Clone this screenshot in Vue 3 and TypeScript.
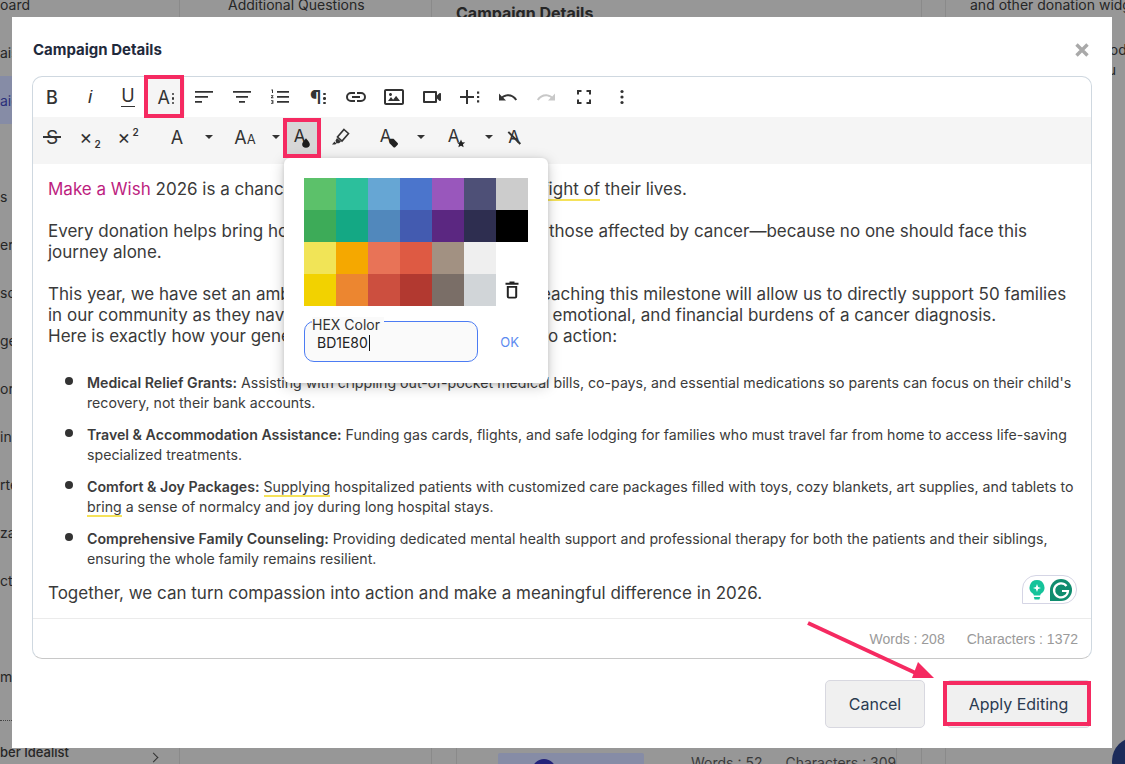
<template>
  <div class="page">
    <!-- dimmed page behind the dialog -->
    <div class="backdrop">
      <aside class="side">
        <div class="side-top">oard</div>
        <div v-for="(label, i) in sideItems" :key="i" class="side-item" :class="{ active: i === 1 }">{{ label }}</div>
        <div class="side-dots"></div>
        <div class="side-last"><span>ber Idealist</span><i class="chev"></i></div>
      </aside>
      <section class="col-two">Additional Questions</section>
      <section class="col-three">
        <h2>Campaign Details</h2>
        <div class="col-three-foot">
          <div class="thumb"><span></span></div>
          <div class="counts"><span>Words : 52</span><span>Characters : 309</span></div>
        </div>
      </section>
      <div class="col-gap"></div>
      <section class="col-four">
        <p>and other donation widgets</p>
        <p class="far">Good</p>
        <p class="far next">You</p>
      </section>
    </div>

    <div class="modal">
      <header class="modal-head">
        <h1>Campaign Details</h1>
        <svg class="close" width="16" height="16" viewBox="0 0 16 16"><path d="M2.500 2.500l11 11M13.500 2.500l-11 11" /></svg>
      </header>

      <div class="editor">
        <div class="tb-row">
          <span class="tb tb-b">B</span>
          <span class="tb tb-i">i</span>
          <span class="tb tb-u">U</span>
          <span class="tb tb-a on">A<em class="dots"><b></b><b></b><b></b></em></span>
          <span class="tb"><svg viewBox="0 0 24 24"><path d="M3 6h18v1.700H3zM3 11h13v1.700H3zM3 16h7v1.700H3z" /></svg></span>
          <span class="tb"><svg viewBox="0 0 24 24"><path d="M3 6h18v1.700H3zM6 11h12v1.700H6zM9 16h6v1.700H9z" /></svg></span>
          <span class="tb"><svg viewBox="0 0 24 24"><path d="M9 6h12v1.800H9zM9 11h12v1.800H9zM9 16h12v1.800H9zM3.400 4.500h1.600v3.600H4V5.600h-.6zM3 10.200h2.400v.9l-1.300 1.200h1.300v.9H3v-.9l1.300-1.200H3zM3 15.200h2.400v3.600H3v-.9h1.400v-.5H3.600v-.8h.8v-.5H3z" /></svg></span>
          <span class="tb tb-para">¶<em class="dots"><b></b><b></b><b></b></em></span>
          <span class="tb"><svg viewBox="0 0 24 24"><path d="M11,17H7A5,5,0,0,1,7,7h4V9H7a3,3,0,0,0,0,6h4ZM17,7H13V9h4a3,3,0,0,1,0,6H13v2h4A5,5,0,0,0,17,7Zm-1,4H8v2h8Z" /></svg></span>
          <span class="tb"><svg viewBox="0 0 24 24"><path d="M14.200,11l3.800,5H6l3-3.900l2.100,2.700L14,11H14.200z M8.500,11c0.800,0,1.500-0.700,1.500-1.500S9.300,8,8.500,8S7,8.700,7,9.500C7,10.300,7.700,11,8.500,11z M22,6v12c0,1.100-0.900,2-2,2H4c-1.100,0-2-0.900-2-2V6c0-1.100,0.900-2,2-2h16C21.100,4,22,4.900,22,6z M20,8.800V6H4v12h16V8.800z" /></svg></span>
          <span class="tb"><svg viewBox="0 0 24 24"><path d="M15,8v8H5V8H15m2,2.500V7a1,1,0,0,0-1-1H4A1,1,0,0,0,3,7V17a1,1,0,0,0,1,1H16a1,1,0,0,0,1-1V13.500l2.290,2.290A1,1,0,0,0,21,15.080V8.910a1,1,0,0,0-1.710-.71Z" /></svg></span>
          <span class="tb"><svg viewBox="0 0 24 24"><path d="M2 11h6V5h2v6h6v2h-6v6H8v-6H2zM19 6.500h2.200v2.200H19zM19 10.900h2.200v2.200H19zM19 15.300h2.200v2.200H19z" /></svg></span>
          <span class="tb"><svg viewBox="0 0 24 24"><path d="M10.400,9.400c-1.700,0.300-3.200,0.900-4.600,2L3,8.500v7h7l-2.700-2.700c3.700-2.600,8.800-1.800,11.500,1.900c0.200,0.300,0.400,0.500,0.500,0.800l1.800-0.900C18.900,10.800,14.700,8.700,10.400,9.400z" /></svg></span>
          <span class="tb off"><svg viewBox="0 0 24 24"><path d="M13.600,9.400c1.700,0.300,3.200,0.900,4.600,2L21,8.500v7h-7l2.700-2.700C13,10.100,7.900,11,5.200,14.700c-0.200,0.300-0.400,0.500-0.500,0.800L2.900,14.600C5.100,10.800,9.300,8.700,13.600,9.400z" /></svg></span>
          <span class="tb"><svg viewBox="0 0 24 24"><path d="M5 9.500V5h4.500v2H7v2.500zM14.500 5H19v4.500h-2V7h-2.500zM5 14.500h2V17h2.500v2H5zM17 14.500h2V19h-4.500v-2H17z" /></svg></span>
          <span class="tb"><svg viewBox="0 0 24 24"><circle cx="12" cy="6.500" r="1.600" /><circle cx="12" cy="12" r="1.600" /><circle cx="12" cy="17.500" r="1.600" /></svg></span>
        </div>

        <div class="tb-row second">
          <span class="tb tb-s">S<i class="strike"></i></span>
          <span class="tb tb-x">×<sub>2</sub></span>
          <span class="tb tb-x">×<sup>2</sup></span>
          <span class="gap11"></span>
          <span class="tb tb-font">A</span>
          <span class="caret w26"></span>
          <span class="tb tb-font w46">A<small>A</small></span>
          <span class="caret w15"></span>
          <span class="tb tb-color">A<svg class="badge" viewBox="0 0 10 12"><path d="M5 0C5 0 9.800 5 9.800 7.700a4.800 4.300 0 0 1-9.600 0C.2 5 5 0 5 0z" /></svg></span>
          <span class="tb"><svg viewBox="0 0 24 24"><path class="hl" d="M16 4.500L20.500 8.500L14 16L9.500 12Z" /><path d="M9 13L13 16.500L11 18.200L8.300 18.200L7.500 15.500ZM6.500 16.500L8.500 18.800L7 19.500L4 19.500Z" /></svg></span>
          <span class="gap10"></span>
          <span class="tb tb-color">A<svg class="badge tag" viewBox="0 0 12 12"><path d="M2 1h4l5 5a1.500 1.500 0 0 1 0 2l-3 3a1.500 1.500 0 0 1-2 0L1 6V2a1 1 0 0 1 1-1z" /></svg></span>
          <span class="caret w27"></span>
          <span class="gap4"></span>
          <span class="tb tb-color tb-star">A<svg class="badge star" viewBox="0 0 12 12"><path d="M6 .5l1.600 3.700 4 .3-3 2.600.9 4L6 9l-3.500 2.100.9-4-3-2.600 4-.3z" /></svg></span>
          <span class="caret w26"></span>
          <span class="tb tb-clear w24">A<i class="slash"></i></span>
        </div>

        <div class="content">
          <p><span class="pink">Make a Wish</span> 2026 is a chance to stand beside families in <span class="gr">the fight of</span> their lives.</p>
          <p class="skip">Every donation helps bring hope, comfort, and practical aid to those affected by cancer—because no one should face this<br />journey alone.</p>
          <p class="skip">This year, we have set an ambitious goal of raising $50,000, reaching this milestone will allow us to directly support 50 families<br />in our community as they navigate the overwhelming physical, emotional, and financial burdens of a cancer diagnosis.<br />Here is exactly how your generous contributions will be put into action:</p>

          <ul>
            <li v-for="item in items" :key="item.title">
              <i class="dot"></i>
              <span><strong>{{ item.title }}</strong> <template v-for="(part, i) in item.parts" :key="i"><span :class="{ gr: part.mark }">{{ part.text }}</span></template></span>
            </li>
          </ul>

          <p class="last">Together, we can turn compassion into action and make a meaningful difference in 2026.</p>

          <div class="grammarly">
            <svg width="20" height="24" viewBox="0 0 20 24"><path class="bulb" d="M10 2a7.500 7.500 0 0 0-4.300 13.600c.8.6 1.100 1.200 1.100 2h6.400c0-.8.3-1.400 1.100-2A7.500 7.500 0 0 0 10 2z" /><path class="bulb" d="M6.800 19h6.400l-.8 2.500H7.600z" /><path fill="#fff" d="M10 6l1.100 2.900L14 10l-2.900 1.100L10 14l-1.100-2.900L6 10l2.900-1.100z" /></svg>
            <svg width="24" height="24" viewBox="0 0 24 24"><path class="g-tile" d="M12 1a11 11 0 0 1 0 22H1V12A11 11 0 0 1 12 1z" /><path class="g-mark" d="M17.500 8A7 7 0 1 0 19 13h-6" /></svg>
          </div>
        </div>

        <div class="counter">
          <span>Words : 208</span>
          <span>Characters : 1372</span>
        </div>

        <!-- text colour popup -->
        <div class="popup">
          <div class="swatches">
            <i v-for="(c, i) in swatches" :key="i" class="swatch" :style="{ background: c }"></i>
            <span class="swatch trash">
              <svg width="24" height="24" viewBox="0 0 24 24"><path fill-rule="evenodd" d="M9.500 3.500v1.300H5.500v1.900h13V4.800h-4V3.500zM6.800 8v10.500a2 2 0 0 0 2 2h6.400a2 2 0 0 0 2-2V8zm2 1.800h6.400v8.900H8.800z" /></svg>
            </span>
          </div>
          <div class="hex-row">
            <div class="hex">
              <label>HEX Color</label>
              <span class="hex-val">BD1E80</span>
            </div>
            <span class="ok">OK</span>
          </div>
        </div>
      </div>

      <footer class="modal-foot">
        <button class="btn">Cancel</button>
        <button class="btn apply">Apply Editing</button>
      </footer>
    </div>

    <!-- red annotations drawn over the screenshot -->
    <div class="mark mark-a"></div>
    <div class="mark mark-drop"></div>
    <div class="mark mark-apply"></div>
    <svg class="arrow" width="140" height="70" viewBox="0 0 140 70">
      <path d="M4 4l112 52" />
      <polygon points="130,59 114,43 108,59" />
    </svg>
    <div class="chat-bubble"></div>
  </div>
</template>

<script setup lang="ts">
interface Part {
  text: string
  mark?: boolean
}

interface Item {
  title: string
  parts: Part[]
}

const sideItems: string[] = ['ais', 'aig', '', 's', 'er', 'so', 'ge', 'or', 'in', 'rte', 'za', 'cts', '', 'mp']

const swatches: string[] = [
  '#5cc16a', '#2cbf9c', '#66a6d4', '#4b75cc', '#9957bc', '#4e5077', '#cccccc',
  '#3dab58', '#14a884', '#5188bc', '#435bb0', '#5b2781', '#2e2e50', '#000000',
  '#f1e457', '#f5a800', '#e87357', '#de5a43', '#a29182', '#efefef', 'transparent',
  '#f2d200', '#ec8630', '#cc4f3f', '#b23930', '#7a6e67', '#d1d5d8'
]

const items: Item[] = [
  {
    title: 'Medical Relief Grants:',
    parts: [{ text: "Assisting with crippling out-of-pocket medical bills, co-pays, and essential medications so parents can focus on their child's recovery, not their bank accounts." }]
  },
  {
    title: 'Travel & Accommodation Assistance:',
    parts: [{ text: 'Funding gas cards, flights, and safe lodging for families who must travel far from home to access life-saving specialized treatments.' }]
  },
  {
    title: 'Comfort & Joy Packages:',
    parts: [
      { text: 'Supplying', mark: true },
      { text: ' hospitalized patients with customized care packages filled with toys, cozy blankets, art supplies, and tablets to ' },
      { text: 'bring', mark: true },
      { text: ' a sense of normalcy and joy during long hospital stays.' }
    ]
  },
  {
    title: 'Comprehensive Family Counseling:',
    parts: [{ text: 'Providing dedicated mental health support and professional therapy for both the patients and their siblings, ensuring the whole family remains resilient.' }]
  }
]
</script>

<style>
html, body {
  margin: 0;
  background: #979797;
  overflow: hidden;
}
</style>

<style scoped>
.page {
  position: relative;
  width: 1125px;
  height: 764px;
  overflow: hidden;
  font-family: Inter, "Liberation Sans", sans-serif;
  color: #333;
}

.backdrop {
  display: flex;
  height: 100%;
  background: #979797;
  color: #262626;
  font-size: 14px;
}

.side {
  width: 180px;
  flex: none;
  box-sizing: border-box;
  border-right: 1px solid #8a8a8a;
  display: flex;
  flex-direction: column;
  overflow: hidden;
  white-space: nowrap;
}

.side-top {
  height: 28px;
  line-height: 10px;
}

.side-item {
  height: 48px;
  flex: none;
  display: flex;
  align-items: center;
  font-size: 14px;
}

.side-item.active {
  background: #868ca6;
  color: #2b2f7a;
}

.side-dots {
  width: 12px;
  height: 0;
  margin-top: 20px;
  flex: none;
  border-top: 1px dotted #444;
}

.side-last {
  display: flex;
  justify-content: space-between;
  padding-right: 22px;
  padding-top: 23px;
  font-weight: 500;
  font-size: 13px;
  line-height: 16px;
}

.chev {
  width: 6px;
  height: 6px;
  margin-top: 10px;
  border-top: 1px solid #333;
  border-right: 1px solid #333;
  transform: rotate(45deg);
}

.col-two {
  width: 252px;
  flex: none;
  padding-left: 48px;
  box-sizing: border-box;
  border-right: 1px solid #8a8a8a;
  line-height: 10px;
}

.col-three {
  width: 490px;
  flex: none;
  box-sizing: border-box;
  padding-left: 24px;
  border-right: 1px solid #8a8a8a;
  display: flex;
  flex-direction: column;
  justify-content: space-between;
}

.col-three h2 {
  margin: 3px 0 0 0;
  font-size: 16px;
  font-weight: 700;
}

.col-three-foot {
  display: flex;
  height: 20px;
  margin-right: 24px;
  padding-left: 41px;
  border-left: 1px solid #8a8a8a;
  border-right: 1px solid #8a8a8a;
  gap: 47px;
}

.thumb {
  width: 146px;
  height: 12px;
  margin-top: 9px;
  flex: none;
  background: #868ca6;
  border-radius: 2px 2px 0 0;
  overflow: hidden;
  padding-left: 34px;
  box-sizing: border-box;
}

.thumb span {
  display: block;
  width: 24px;
  height: 24px;
  margin-top: 6px;
  border-radius: 50%;
  background: #23237a;
}

.counts {
  display: flex;
  gap: 23px;
  margin-top: 11px;
  font-size: 14px;
  line-height: 16px;
  color: #3a3a3a;
  white-space: nowrap;
}

.col-gap {
  width: 23px;
  flex: none;
  border-right: 1px solid #8a8a8a;
}

.col-four {
  flex: 1;
  padding-left: 24px;
  white-space: nowrap;
  overflow: hidden;
}

.col-four p {
  margin: 0;
  line-height: 20px;
  margin-top: -5px;
}

.col-four .far {
  padding-left: 121px;
  margin-top: 25px;
}

.col-four .far.next {
  margin-top: 0;
}

.modal {
  position: absolute;
  left: 12px;
  top: 17px;
  width: 1100px;
  height: 731px;
  box-sizing: border-box;
  padding: 0 20px;
  background: #fff;
  display: flex;
  flex-direction: column;
}

.modal-head {
  height: 59px;
  flex: none;
  display: flex;
  justify-content: space-between;
  align-items: center;
  padding-top: 6px;
  box-sizing: border-box;
}

.modal-head h1 {
  margin: 0 0 0 1px;
  font-size: 15px;
  font-weight: 700;
  color: #1f2a3c;
}

.close {
  margin-right: 2px;
  fill: none;
  stroke: #a9a9a9;
  stroke-width: 3.400;
}

.editor {
  position: relative;
  height: 583px;
  flex: none;
  box-sizing: border-box;
  border: 1px solid #cfd8e0;
  border-bottom-color: #c8c8c8;
  border-radius: 10px;
  display: flex;
  flex-direction: column;
}

.tb-row {
  height: 40px;
  flex: none;
  display: flex;
  align-items: center;
}

.tb-row.second {
  height: 47px;
  background: #f5f5f5;
  padding-bottom: 7px;
  box-sizing: border-box;
}

.tb {
  position: relative;
  width: 38px;
  height: 38px;
  flex: none;
  display: flex;
  align-items: center;
  justify-content: center;
  color: #333;
  font-size: 18px;
}

.tb svg {
  width: 24px;
  height: 24px;
  fill: #333;
}

.tb.off svg {
  fill: #c8c8c8;
}

.tb svg .hl {
  fill: none;
  stroke: #333;
  stroke-width: 1.600;
}

.tb-b {
  font-size: 18px;
  font-weight: 500;
}

.tb-i {
  font-style: italic;
  font-family: "Liberation Sans", sans-serif;
  font-size: 19px;
}

.tb-u {
  font-size: 18px;
  padding-bottom: 3px;
  box-sizing: border-box;
}

.tb-u::after {
  content: "";
  position: absolute;
  left: 12px;
  right: 12px;
  bottom: 9px;
  height: 1.500px;
  background: #333;
}

.tb-a {
  font-size: 18px;
  gap: 2px;
}

.tb-a.on {
  background: #f5f5f5;
}

.dots {
  display: flex;
  flex-direction: column;
  gap: 2px;
  margin-top: 3px;
}

.dots b {
  width: 2.500px;
  height: 2.500px;
  border-radius: 50%;
  background: #333;
}

.tb-para {
  font-size: 19px;
  font-weight: 600;
  gap: 2px;
}

.tb-s {
  font-size: 19px;
}

.strike {
  position: absolute;
  left: 10px;
  right: 10px;
  top: 18px;
  height: 1.500px;
  background: #333;
}

.tb-x {
  font-size: 20px;
}

.tb-x sub,
.tb-x sup {
  font-size: 10px;
  font-weight: 600;
  line-height: 0;
  position: relative;
  margin-left: 2px;
}

.tb-x sub {
  top: 7px;
}

.tb-x sup {
  top: -5px;
}

.tb-font {
  font-size: 18px;
}

.tb-font small {
  font-size: 13px;
  margin-top: 4px;
}

.tb-color {
  font-size: 17px;
  padding-right: 5px;
  padding-bottom: 2px;
  box-sizing: border-box;
}

.tb-star {
  padding-right: 7px;
}

.tb-color .badge {
  position: absolute;
  width: 8px;
  height: 10px;
  left: 19px;
  top: 20px;
  fill: #222;
}

.tb-color .badge.tag {
  width: 11px;
  height: 10px;
}

.tb-color .badge.star {
  width: 10px;
  height: 9px;
  left: 18px;
  top: 21px;
}

.tb-clear {
  font-size: 17px;
}

.slash {
  position: absolute;
  top: 19px;
  left: 3.500px;
  width: 17px;
  height: 1.500px;
  background: #333;
  transform: rotate(45deg);
}

.caret {
  flex: none;
  height: 38px;
  display: flex;
  align-items: center;
  justify-content: center;
}

.caret::before {
  content: "";
  border-left: 4px solid transparent;
  border-right: 4px solid transparent;
  border-top: 4px solid #333;
}

.w15 { width: 15px; }
.w24 { width: 24px; }
.w26 { width: 26px; }
.w27 { width: 27px; }
.w46 { width: 46px; }
.gap11 { width: 11px; flex: none; }
.gap10 { width: 10px; flex: none; }
.gap4 { width: 4px; flex: none; }

.content {
  position: relative;
  flex: 1;
  padding: 15px 15px 0;
  font-size: 17px;
  line-height: 21px;
  color: #3a3a3a;
  white-space: nowrap;
}

.content p {
  margin: 0;
}

.content .skip {
  margin-top: 21px;
}

.pink {
  color: #bd1e80;
}

.gr {
  border-bottom: 2px solid #f5e25a;
}

ul {
  list-style: none;
  margin: 26px 0 0;
  padding: 0 0 0 17px;
  font-size: 14.170px;
  line-height: 20px;
  color: #3c3c3c;
  white-space: normal;
}

li {
  display: flex;
  gap: 14px;
  margin-bottom: 12px;
  padding-right: 0;
}

li strong {
  font-weight: 600;
}

.dot {
  width: 8px;
  height: 8px;
  flex: none;
  margin-top: 4px;
  border-radius: 50%;
  background: #333;
}

.content .last {
  margin-top: 14px;
}

.grammarly {
  position: absolute;
  right: 14px;
  bottom: 14px;
  width: 55px;
  height: 29px;
  box-sizing: border-box;
  border: 1px solid #d5d5e5;
  border-radius: 14px 14px 14px 0;
  background: #fff;
  display: flex;
  align-items: center;
  justify-content: center;
  gap: 2px;
}

.bulb { fill: #15c39a; }
.g-tile { fill: #0f8c6e; }
.g-mark {
  fill: none;
  stroke: #fff;
  stroke-width: 2.200;
}

.counter {
  height: 40px;
  flex: none;
  box-sizing: border-box;
  border-top: 1px solid #ebebeb;
  display: flex;
  justify-content: flex-end;
  align-items: center;
  gap: 22px;
  padding-right: 13px;
  font-family: "Liberation Sans", sans-serif;
  font-size: 14px;
  color: #9a9a9a;
}

.popup {
  position: absolute;
  left: 251px;
  top: 81px;
  width: 264px;
  height: 225px;
  box-sizing: border-box;
  padding: 20px;
  background: #fff;
  border-radius: 6px;
  box-shadow: 0 3px 14px rgba(0, 0, 0, 0.22), 0 1px 4px rgba(0, 0, 0, 0.12);
}

.swatches {
  display: grid;
  grid-template-columns: repeat(7, 32px);
  grid-auto-rows: 32px;
}

.swatch {
  display: block;
}

.trash {
  display: flex;
  align-items: center;
  justify-content: center;
  fill: #222;
}

.hex-row {
  display: flex;
  justify-content: space-between;
  align-items: center;
  margin-top: 15px;
}

.hex {
  position: relative;
  width: 174px;
  height: 41px;
  box-sizing: border-box;
  border: 1px solid #4c7cf3;
  border-radius: 10px;
  background: #fafafa;
}

.hex label {
  position: absolute;
  left: 7px;
  top: -5px;
  padding: 0 4px 0 0;
  background: #fafafa;
  font-size: 14px;
  line-height: 16px;
  color: #333;
}

.hex-val {
  position: absolute;
  left: 12px;
  top: 13px;
  padding-right: 1px;
  border-right: 1px solid #111;
  font-size: 14px;
  line-height: 16px;
  color: #222;
}

.ok {
  margin-right: 9px;
  font-size: 13px;
  color: #5c8af0;
}

.modal-foot {
  flex: 1;
  display: flex;
  justify-content: flex-end;
  align-items: flex-start;
  gap: 21px;
  padding-top: 21px;
  padding-right: 1px;
}

.btn {
  width: 100px;
  height: 48px;
  box-sizing: border-box;
  border: 1px solid #d8d8e0;
  border-radius: 5px;
  background: #f0f0f0;
  font-family: inherit;
  font-size: 16px;
  color: #2a3a50;
}

.btn.apply {
  width: 145px;
}

.mark {
  position: absolute;
  box-sizing: border-box;
  border: 4px solid #f52a61;
}

.mark-a {
  left: 144px;
  top: 75px;
  width: 40px;
  height: 43px;
}

.mark-drop {
  left: 283px;
  top: 118px;
  width: 38px;
  height: 40px;
  background: rgba(0, 0, 0, 0.12);
}

.mark-apply {
  left: 943px;
  top: 681px;
  width: 148px;
  height: 45px;
}

.arrow {
  position: absolute;
  left: 804px;
  top: 619px;
}

.arrow path {
  fill: none;
  stroke: #f52a61;
  stroke-width: 4;
}

.arrow polygon {
  fill: #f52a61;
}

.chat-bubble {
  position: absolute;
  left: 1112px;
  top: 737px;
  width: 48px;
  height: 48px;
  border-radius: 50%;
  background: #1c2b5a;
}
</style>
